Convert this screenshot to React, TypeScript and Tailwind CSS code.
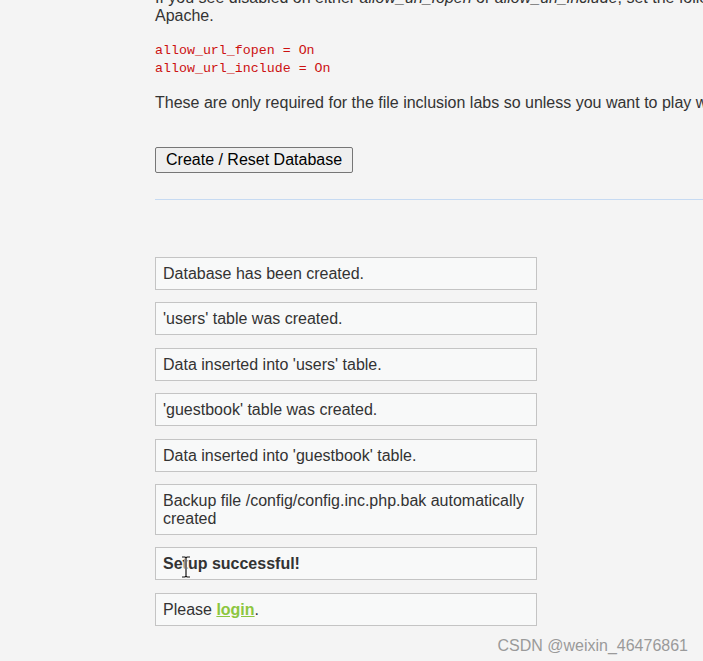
import React from "react"

const messages = [
  "Database has been created.",
  "'users' table was created.",
  "Data inserted into 'users' table.",
  "'guestbook' table was created.",
  "Data inserted into 'guestbook' table.",
  "Backup file /config/config.inc.php.bak automatically created",
]

function Message({ children }: { children: React.ReactNode }) {
  return (
    <div className="w-[382px] border border-[#c4c4c4] bg-[#f8f9f9] px-[7px] pt-[7px] pb-[6px] leading-[18px] text-[#333]">
      {children}
    </div>
  )
}

function Cursor() {
  return (
    <svg className="absolute left-[181px] top-[556px]" width="10" height="22" viewBox="0 0 10 22">
      <path d="M1 1h3l1 1 1-1h3M5 2v18M1 21h3l1-1 1 1h3" fill="none" stroke="#fff" strokeWidth="3" />
      <path d="M1 1h3l1 1 1-1h3M5 2v18M1 21h3l1-1 1 1h3" fill="none" stroke="#111" strokeWidth="1.2" />
    </svg>
  )
}

export default function App() {
  return (
    <div className="relative w-[703px] h-[661px] overflow-hidden bg-[#f4f4f4] font-['Liberation_Sans',Arial,sans-serif] text-[16px] text-[#333]">
      <div className="pl-[155px] -mt-[11px] whitespace-nowrap">
        <p className="leading-[18px]">
          If you see disabled on either <em>allow_url_fopen</em> or <em>allow_url_include</em>, set the following in your php.ini file and restart
          <br />
          Apache.
        </p>

        <pre className="mt-[17px] font-['Liberation_Mono','Courier_New',monospace] text-[13.3px] leading-[18px] text-[#cc1111]">
          allow_url_fopen = On{"\n"}allow_url_include = On
        </pre>

        <p className="mt-[16px] leading-[18px]">
          These are only required for the file inclusion labs so unless you want to play with those, you can ignore them.
        </p>

        <div className="mt-[35px]">
          <button className="h-[26px] px-[10px] rounded-[2px] border border-[#767676] bg-[#efefef] text-[16px] text-black leading-none">
            Create / Reset Database
          </button>
        </div>

        <div className="mt-[26px] h-px bg-[#c6daf2]" />

        <div className="mt-[57px] flex flex-col gap-[12.4px] whitespace-normal">
          {messages.map((m, i) => (
            <Message key={i}>{m}</Message>
          ))}
          <Message>
            <b className="font-bold">Setup successful!</b>
          </Message>
          <Message>
            Please{" "}
            <a href="#" className="font-bold text-[#8cc63f] underline">
              login
            </a>
            .
          </Message>
        </div>
      </div>

      <Cursor />

      <div className="absolute right-[15px] top-[634px] text-[16px] text-[#9a9a9a] font-['Liberation_Sans',Arial,sans-serif]">
        CSDN @weixin_46476861
      </div>
    </div>
  )
}
